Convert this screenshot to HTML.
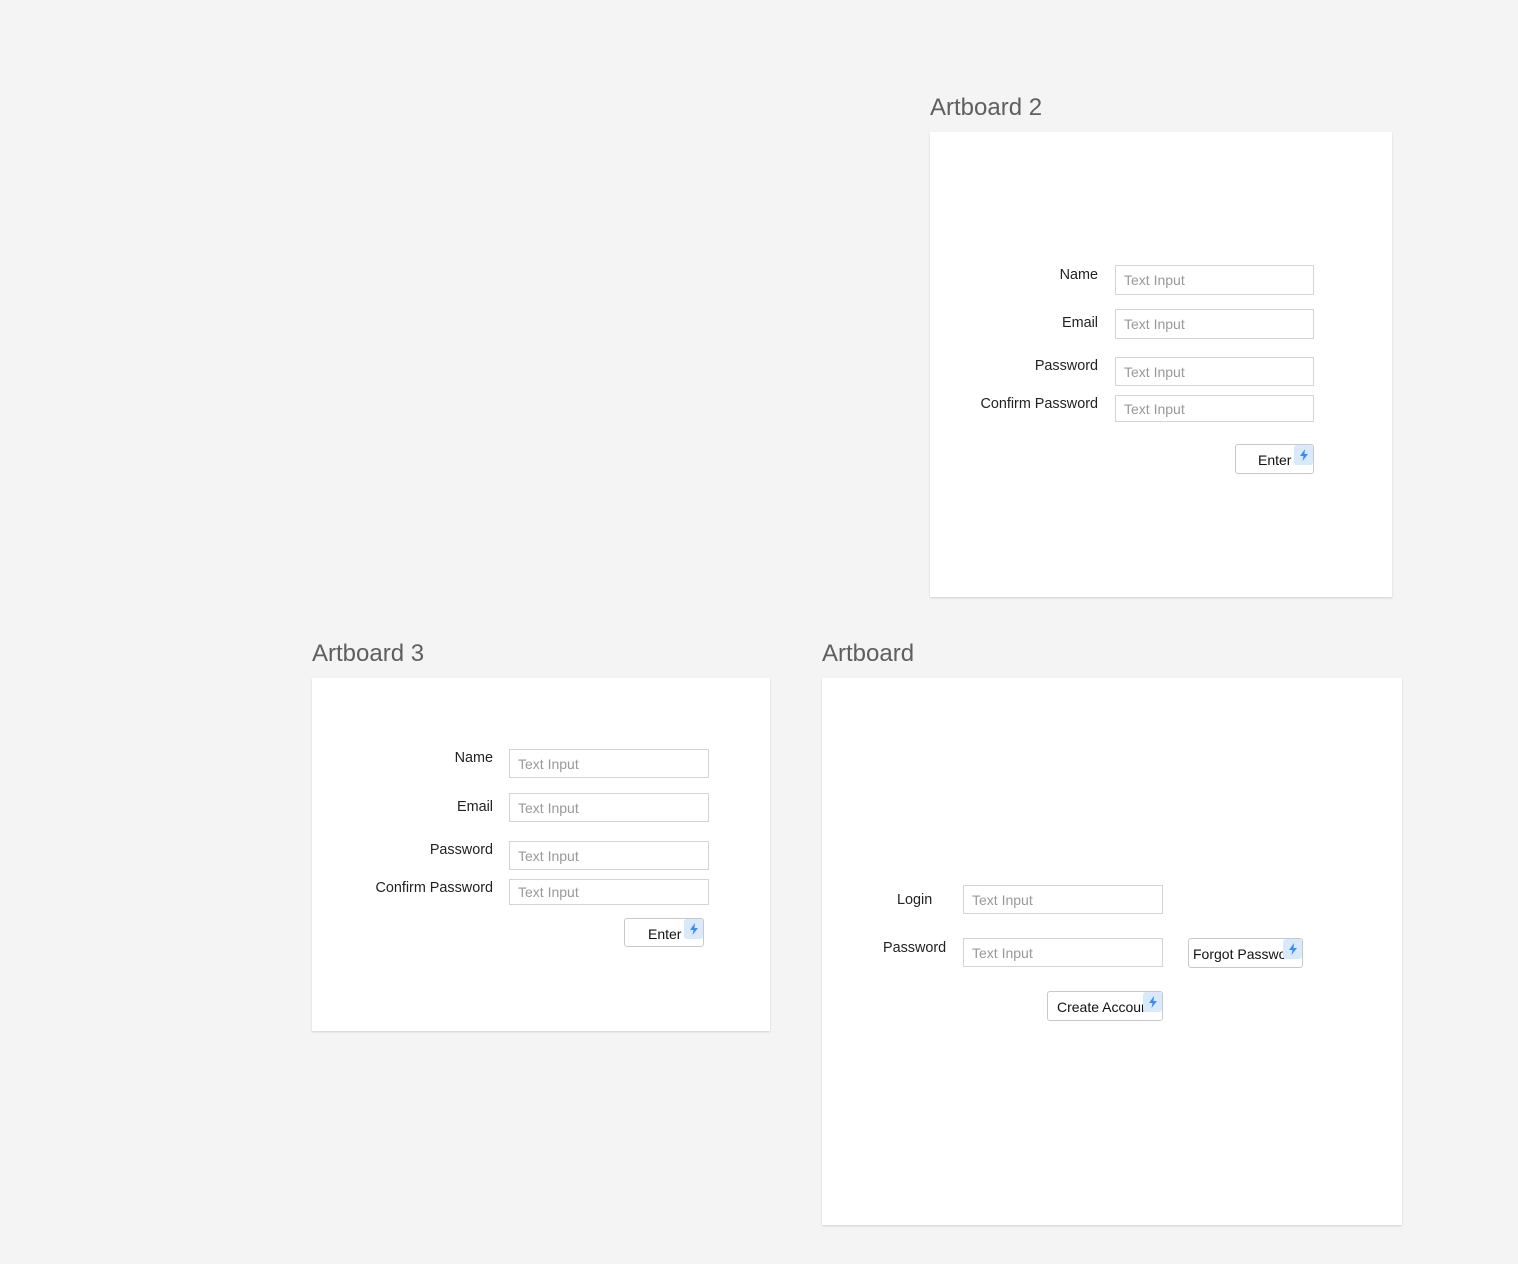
<!DOCTYPE html>
<html><head><meta charset="utf-8"><style>
body{margin:0;width:1518px;height:1264px;background:#f4f4f4;font-family:"Liberation Sans",sans-serif;position:relative;overflow:hidden}
.t{position:absolute;font-size:24px;color:#5f5f5f;line-height:28px}
.card{position:absolute;background:#fff;box-shadow:0 1px 2px rgba(0,0,0,.15)}
.l{position:absolute;font-size:14.4px;color:#222;text-align:right;line-height:16px}
.i{position:absolute;box-sizing:border-box;border:1px solid #d4d4d4;font-size:14px;color:#999;padding-left:8px;display:flex;align-items:center;background:#fff}
.b{position:absolute;box-sizing:border-box;border:1px solid #c8c8c8;border-radius:3px;font-size:14px;color:#111;background:#fff;overflow:hidden;white-space:nowrap;display:flex;align-items:center}
.z{position:absolute;right:0;top:0;width:19px;height:20px;background:#d8e9fb;border-radius:3px;display:flex;align-items:center;justify-content:center}
</style></head><body>
<svg width="0" height="0" style="position:absolute"><symbol id="bolt" viewBox="0 0 10 12"><path d="M6 0L1 7h3.5L3.5 12 9 5H5.5z" fill="#3b8cf0"/></symbol></svg>

<div class="t" style="left:930px;top:94px">Artboard 2</div>
<div class="card" style="left:930px;top:132px;width:462px;height:465px"></div>
<div class="l" style="right:420px;top:267px">Name</div>
<div class="l" style="right:420px;top:315px">Email</div>
<div class="l" style="right:420px;top:358px">Password</div>
<div class="l" style="right:420px;top:396px">Confirm Password</div>
<div class="i" style="left:1115px;top:265px;width:199px;height:30px">Text Input</div>
<div class="i" style="left:1115px;top:309px;width:199px;height:30px">Text Input</div>
<div class="i" style="left:1115px;top:357px;width:199px;height:29px">Text Input</div>
<div class="i" style="left:1115px;top:395px;width:199px;height:27px">Text Input</div>
<div class="b" style="left:1235px;top:444px;width:79px;height:30px;padding-left:22px;padding-top:2px">Enter<span class="z"><svg width="10" height="12"><use href="#bolt"/></svg></span></div>

<div class="t" style="left:312px;top:640px">Artboard 3</div>
<div class="card" style="left:312px;top:678px;width:458px;height:353px"></div>
<div class="l" style="right:1025px;top:750px">Name</div>
<div class="l" style="right:1025px;top:799px">Email</div>
<div class="l" style="right:1025px;top:842px">Password</div>
<div class="l" style="right:1025px;top:880px">Confirm Password</div>
<div class="i" style="left:509px;top:749px;width:200px;height:29px">Text Input</div>
<div class="i" style="left:509px;top:793px;width:200px;height:29px">Text Input</div>
<div class="i" style="left:509px;top:841px;width:200px;height:29px">Text Input</div>
<div class="i" style="left:509px;top:879px;width:200px;height:26px">Text Input</div>
<div class="b" style="left:624px;top:918px;width:80px;height:29px;padding-left:23px;padding-top:2px">Enter<span class="z"><svg width="10" height="12"><use href="#bolt"/></svg></span></div>

<div class="t" style="left:822px;top:640px">Artboard</div>
<div class="card" style="left:822px;top:678px;width:580px;height:547px"></div>
<div class="l" style="left:897px;top:892px;text-align:left">Login</div>
<div class="l" style="left:883px;top:940px;text-align:left">Password</div>
<div class="i" style="left:963px;top:885px;width:200px;height:29px">Text Input</div>
<div class="i" style="left:963px;top:938px;width:200px;height:29px">Text Input</div>
<div class="b" style="left:1188px;top:938px;width:115px;height:30px;padding-left:4px;padding-top:2px">Forgot Password<span class="z"><svg width="10" height="12"><use href="#bolt"/></svg></span></div>
<div class="b" style="left:1047px;top:991px;width:116px;height:30px;padding-left:9px;padding-top:2px">Create Account<span class="z"><svg width="10" height="12"><use href="#bolt"/></svg></span></div>
</body></html>
